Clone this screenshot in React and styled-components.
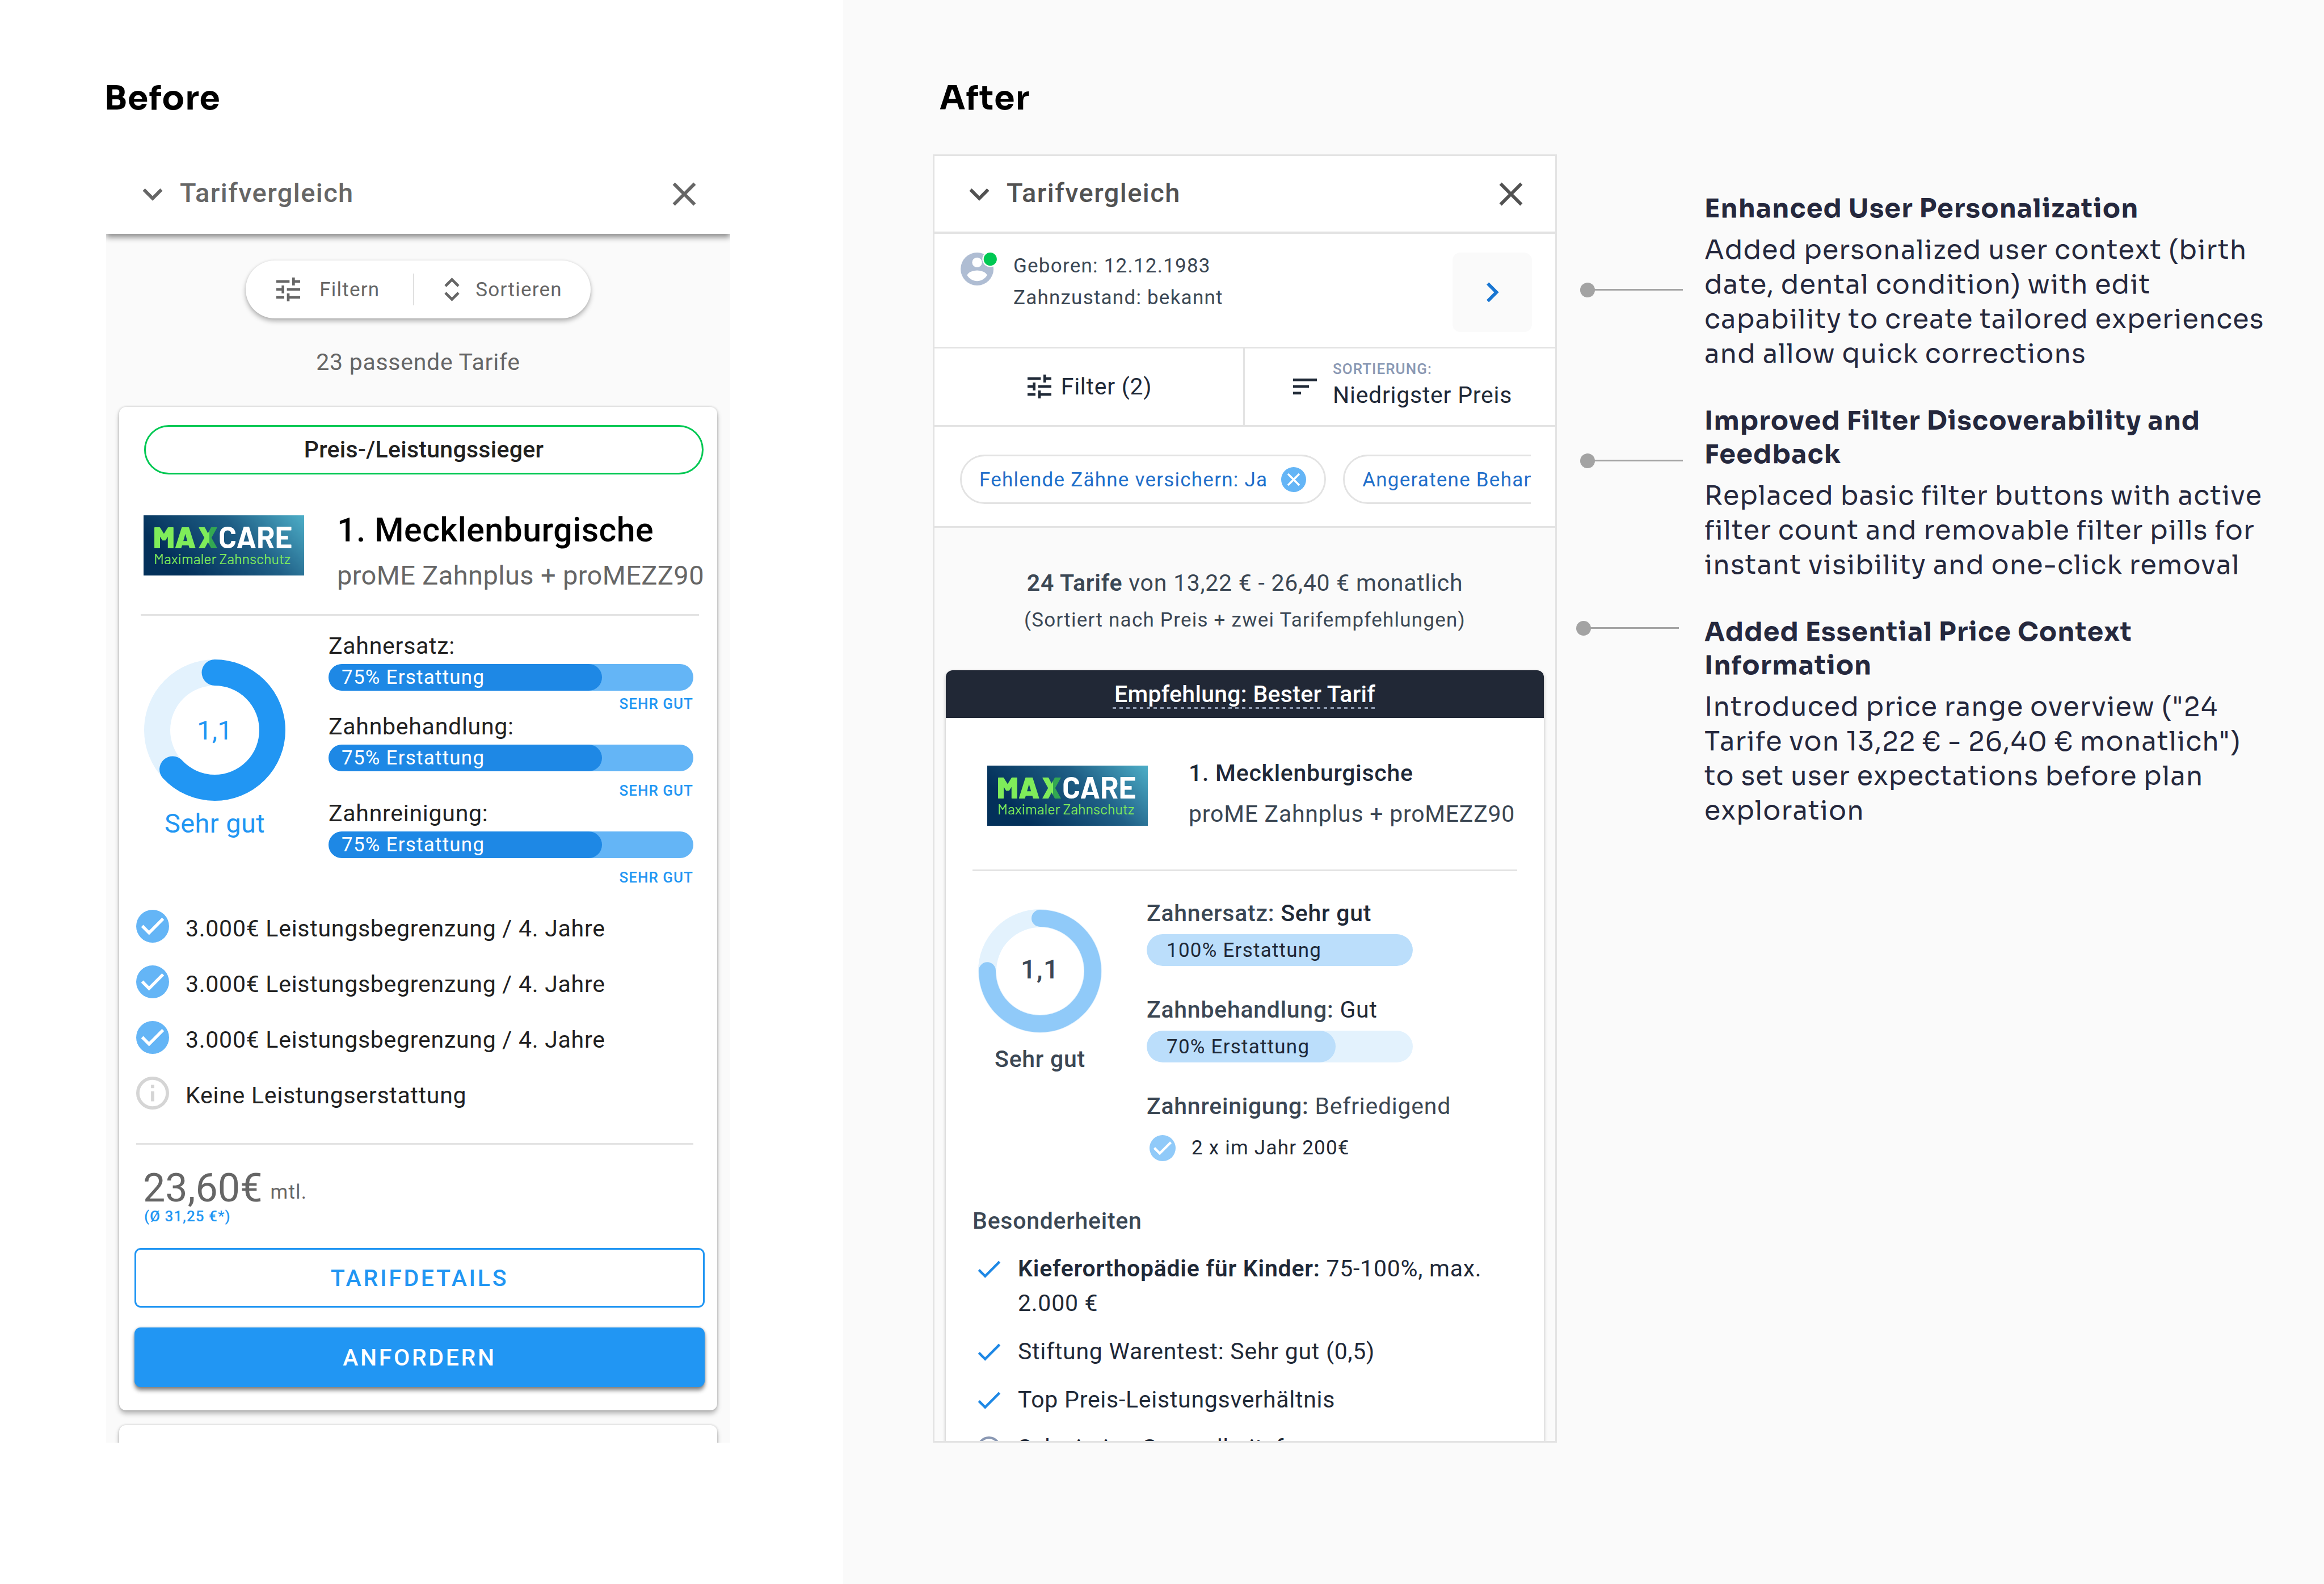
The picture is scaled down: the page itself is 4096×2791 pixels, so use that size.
import React from "react";
import styled, { createGlobalStyle, css } from "styled-components";

const Global = createGlobalStyle`
  *, *::before, *::after { box-sizing: border-box; }
  body { margin: 0; background: #ffffff; font-family: Roboto, "Noto Sans", sans-serif; }
  h1, h2, h3, p, ul { margin: 0; padding: 0; font-weight: 400; }
  ul { list-style: none; }
  button { margin: 0; padding: 0; border: 0; background: none; font: inherit; color: inherit; cursor: pointer; }
  svg { display: block; flex: none; }
`;

/* Type scale shared by both screens */
const caption = css`font-size: 35px; letter-spacing: 0.035em;`;
const body = css`font-size: 41px; letter-spacing: 0.018em;`;
const overline = css`font-size: 26px; letter-spacing: 0.04em; font-weight: 500;`;

const Page = styled.main`
  display: flex;
  min-height: 100vh;
`;
const BeforeSection = styled.section`
  flex: 0 0 36.28%;
  padding: 138px 0 0 184px;
`;
const AfterSection = styled.section`
  flex: 1;
  min-width: 0;
  padding: 138px 105px 0 158px;
  background: #fafafa;
`;
const SectionTitle = styled.h1`
  margin: 0 0 62px ${(p) => p.$indent || 0}px;
  font: 700 58px/72px Sora, Inter, sans-serif;
  letter-spacing: 0.02em;
  color: #000;
`;
const Columns = styled.div`
  display: flex;
  align-items: flex-start;
  gap: 34px;
  padding-left: ${(p) => p.$inset || 0}px;
`;
const Screen = styled.article`
  flex: none;
  width: 1100px;
  height: 2270px;
  overflow: hidden;
  background: #fafafa;
  border: ${(p) => (p.$framed ? "3px solid #e3e3e3" : "0")};
`;

/* Screen header */
const Header = styled.header`
  position: relative;
  display: flex;
  align-items: center;
  gap: 12px;
  background: #fff;
  ${(p) =>
    p.$framed
      ? css`height: 137px; padding: 0 43px 0 44px; border-bottom: 4px solid #e3e3e3; color: #525252;`
      : css`height: 140px; padding: 0 46px 0 47px; box-shadow: 0 6px 10px rgba(0, 0, 0, 0.45); color: #666;`}
`;
const HeaderTitle = styled.h2`
  flex: 1;
  padding: 0 0 4px 1px;
  font-size: 47px;
  line-height: 64px;
  font-weight: 500;
  letter-spacing: 0.03em;
`;

const Icon = ({ d, size = 70, box = "0 0 24 24", height }) => (
  <svg width={size} height={height || size} viewBox={box} fill="currentColor" aria-hidden="true">
    <path d={d} />
  </svg>
);
const EXPAND = "M16.59 8.59 12 13.17 7.41 8.59 6 10l6 6 6-6z";
const CLOSE = "M19 6.41 17.59 5 12 10.59 6.41 5 5 6.41 10.59 12 5 17.59 6.41 19 12 13.41 17.59 19 19 17.59 13.41 12z";
const RIGHT = "M10 6 8.59 7.41 13.17 12l-4.58 4.59L10 18l6-6z";
const TUNE =
  "M3 17v2h6v-2H3zM3 5v2h10V5H3zm10 16v-2h8v-2h-8v-2h-2v6h2zM7 9v2H3v2h4v2h2V9H7zm14 4v-2H11v2h10zm-6-4h2V7h4V5h-4V3h-2v6z";
const SORT = "M3 18h6v-2H3v2zM3 6v2h18V6H3zm0 7h12v-2H3v2z";
const DONE = "M9 16.17 4.83 12l-1.42 1.41L9 19 21 7l-1.41-1.41z";

const ScreenHeader = ({ framed }) => (
  <Header $framed={framed}>
    <button aria-label="Zurück"><Icon d={EXPAND} /></button>
    <HeaderTitle>Tarifvergleich</HeaderTitle>
    <button aria-label="Schließen"><Icon d={CLOSE} /></button>
  </Header>
);

const CheckCircle = ({ size, color }) => (
  <svg width={size} height={size} viewBox="0 0 60 60" aria-hidden="true">
    <circle cx="30" cy="30" r="30" fill={color} />
    <path d="M11 29.5 23.5 42 49 16.5" fill="none" stroke="#fff" strokeWidth="5.6" />
  </svg>
);
const InfoCircle = ({ size, color }) => (
  <svg width={size} height={size} viewBox="0 0 60 60" aria-hidden="true">
    <circle cx="30" cy="30" r="27" fill="none" stroke={color} strokeWidth="6" />
    <path d="M27 15h6v6h-6zM27 27h6v18h-6z" fill={color} />
  </svg>
);

const Logo = styled.svg`
  margin: ${(p) => p.$top}px 0 0 ${(p) => p.$left}px;
  font-family: Barlow, Roboto, sans-serif;
`;
const MaxcareLogo = ({ id, top, left }) => (
  <Logo width="283" height="106" viewBox="0 0 283 106" role="img" aria-label="Maxcare" $top={top} $left={left}>
    <defs>
      <linearGradient id={`${id}-bg`} gradientUnits="userSpaceOnUse" x1="80" y1="110" x2="250" y2="-60">
        <stop offset="0" stopColor="#03305a" />
        <stop offset="0.5" stopColor="#1f5f86" />
        <stop offset="1" stopColor="#56bdd4" />
      </linearGradient>
      <linearGradient id={`${id}-x`}>
        <stop offset="0.56" stopColor="#7fec5a" />
        <stop offset="0.56" stopColor="#33a852" />
      </linearGradient>
    </defs>
    <rect width="283" height="106" fill={`url(#${id}-bg)`} />
    <g fontSize="53" fontWeight="900">
      <text x="17" y="58" fill="#7fec5a">MA</text>
      <text x="96" y="58" fill={`url(#${id}-x)`}>X</text>
      <text x="132" y="58" fill="#fff" fontWeight="700">CARE</text>
    </g>
    <text x="18" y="86" fontSize="25" fill="#7fec5a">Maximaler Zahnschutz</text>
  </Logo>
);

/* Score ring */
const RingBox = styled.div`
  display: grid;
  place-items: center;
  width: max-content;
  & > * { grid-area: 1 / 1; }
`;
const Ring = ({ size, track, stroke, value, color, children }) => {
  const r = (size - track) / 2;
  const len = 2 * Math.PI * r;
  return (
    <RingBox>
      <svg width={size} height={size} viewBox={`0 0 ${size} ${size}`} aria-hidden="true">
        <g fill="none" transform={`rotate(-90 ${size / 2} ${size / 2})`}>
          <circle cx={size / 2} cy={size / 2} r={r} stroke="#e3f2fd" strokeWidth={track} />
          <circle cx={size / 2} cy={size / 2} r={r} stroke={color} strokeWidth={stroke} strokeLinecap="round" strokeDasharray={`${len * value} ${len}`} />
        </g>
      </svg>
      {children}
    </RingBox>
  );
};

const Rule = styled.hr`
  height: 3px;
  border: 0;
  background: #e3e3e3;
  margin: ${(p) => p.$m};
`;

/* ---------- Before ---------- */
const ActionPill = styled.div`
  display: flex;
  align-items: center;
  width: max-content;
  height: 102px;
  margin: 47px auto 0;
  border-radius: 51px;
  background: #fff;
  color: #666;
  box-shadow: 0 5px 8px rgba(0, 0, 0, 0.28), 0 0 4px rgba(0, 0, 0, 0.1);
`;
const PillAction = styled.button`
  ${caption}
  display: flex;
  align-items: center;
  gap: ${(p) => p.$gap}px;
  height: 56px;
  padding: ${(p) => p.$pad};
  & + & { border-left: 2px solid #e0e0e0; }
`;
const ResultCount = styled.p`
  ${body}
  margin: 49px 0 51px;
  line-height: 56px;
  text-align: center;
  color: #666;
`;
const OldCard = styled.section`
  margin: 0 23px 26px;
  padding: 32px 22px 41px 27px;
  min-height: 200px;
  border-radius: 12px;
  background: #fff;
  box-shadow: 0 6px 8px rgba(0, 0, 0, 0.26), 0 0 4px rgba(0, 0, 0, 0.2);
`;
const WinnerBadge = styled.p`
  margin: 0 2px 58px 17px;
  border: 3px solid #00c853;
  border-radius: 44px;
  font-size: 41px;
  font-weight: 500;
  letter-spacing: 0.007em;
  line-height: 81px;
  text-align: center;
  color: #212121;
`;
const Provider = styled.div`
  display: flex;
  align-items: flex-start;
  gap: ${(p) => p.$gap}px;
  white-space: nowrap;
`;
const OldName = styled.h3`
  font-size: 59px;
  line-height: 80px;
  letter-spacing: 0.008em;
  font-weight: 500;
  color: #000;
`;
const OldTariff = styled.p`
  font-size: 47px;
  line-height: 80px;
  letter-spacing: 0.008em;
  color: #666;
`;
const Ratings = styled.div`
  display: flex;
  align-items: flex-start;
`;
const ScoreColumn = styled.div`
  display: flex;
  flex-direction: column;
  align-items: center;
  gap: ${(p) => p.$gap}px;
  margin: ${(p) => p.$m};
`;
const OldScore = styled.p`
  font-size: 47px;
  line-height: 64px;
  letter-spacing: 0.008em;
  color: #2196f3;
`;
const OldBars = styled.ul`
  flex: 1;
  margin: 29px 20px 0 0;
`;
const OldLabel = styled.p`
  ${body}
  line-height: 48px;
  margin-bottom: 8px;
  color: #212121;
`;
const Track = styled.div`
  ${caption}
  border-radius: 28px;
  overflow: hidden;
  ${(p) =>
    p.$light
      ? css`width: 469px; height: 56px; line-height: 58px; background: #e3f2fd; color: #1f2937;`
      : css`height: 47px; line-height: 47px; background: #64b5f6; color: #fff;`}
`;
const Fill = styled.div`
  height: 100%;
  border-radius: 28px;
  padding-left: ${(p) => (p.$light ? 35 : 23)}px;
  background: ${(p) => (p.$light ? "#bbdefb" : "#1e88e5")};
  white-space: nowrap;
`;
const OldRating = styled.p`
  ${overline}
  margin-top: ${(p) => p.$gap}px;
  line-height: 31px;
  text-align: right;
  color: #2196f3;
`;
const FeatureList = styled.ul`
  display: grid;
  gap: 40px;
  margin: 41px 0 0 3px;
`;
const Feature = styled.li`
  ${body}
  display: flex;
  gap: 29px;
  line-height: 58px;
  color: #212121;
`;
const FeatureText = styled.span`
  margin-top: 4px;
  height: 54px;
`;
const PriceRow = styled.div`
  display: flex;
  align-items: flex-end;
  gap: 14px;
  margin: 39px 0 0 15px;
  color: #666;
`;
const Price = styled.strong`
  font-size: 70px;
  line-height: 74px;
  font-weight: 400;
`;
const PerMonth = styled.span`
  ${caption}
  line-height: 58px;
`;
const Average = styled.p`
  ${overline}
  margin: 0 0 43px 17px;
  line-height: 26px;
  color: #2196f3;
`;
const CardButton = styled.button`
  display: block;
  width: 100%;
  height: 105px;
  border-radius: 11px;
  font-size: 41px;
  font-weight: 500;
  letter-spacing: 0.089em;
  ${(p) =>
    p.$filled
      ? css`margin-top: 35px; background: #2196f3; color: #fff; box-shadow: 0 6px 7px rgba(0, 0, 0, 0.45), 0 0 4px rgba(0, 0, 0, 0.2);`
      : css`border: 3px solid #2196f3; color: #2196f3;`}
`;

const OLD_BARS = [
  { label: "Zahnersatz:", gap: 8 },
  { label: "Zahnbehandlung:", gap: 19 },
  { label: "Zahnreinigung:", gap: 19 },
];
const OLD_FEATURES = [
  { ok: true, text: "3.000€ Leistungsbegrenzung / 4. Jahre" },
  { ok: true, text: "3.000€ Leistungsbegrenzung / 4. Jahre" },
  { ok: true, text: "3.000€ Leistungsbegrenzung / 4. Jahre" },
  { ok: false, text: "Keine Leistungserstattung" },
];

const BeforeScreen = () => (
  <Screen>
    <ScreenHeader />
    <ActionPill>
      <PillAction $gap={34} $pad="0 59px 0 54px">
        <Icon d={TUNE} size={42} box="3 3 18 18" />
        Filtern
      </PillAction>
      <PillAction $gap={28} $pad="0 50px 0 53px">
        <svg width="27" height="42" viewBox="0 0 27 42" fill="none" stroke="currentColor" strokeWidth="4.6" aria-hidden="true">
          <path d="M2 15 13.5 3.5 25 15M2 27l11.5 11.5L25 27" />
        </svg>
        Sortieren
      </PillAction>
    </ActionPill>
    <ResultCount>23 passende Tarife</ResultCount>
    <OldCard>
      <WinnerBadge>Preis-/Leistungssieger</WinnerBadge>
      <Provider $gap={58}>
        <MaxcareLogo id="old" top={14} left={16} />
        <div>
          <OldName>1. Mecklenburgische</OldName>
          <OldTariff>proME Zahnplus + proMEZZ90</OldTariff>
        </div>
      </Provider>
      <Rule $m="28px 10px 0 11px" />
      <Ratings>
        <ScoreColumn $gap={8} $m="77px 76px 0 17px">
          <Ring size={249} track={46} stroke={46} value={0.63} color="#2196f3">
            <OldScore>1,1</OldScore>
          </Ring>
          <OldScore>Sehr gut</OldScore>
        </ScoreColumn>
        <OldBars>
          {OLD_BARS.map((b) => (
            <li key={b.label}>
              <OldLabel>{b.label}</OldLabel>
              <Track><Fill style={{ width: "75%" }}>75% Erstattung</Fill></Track>
              <OldRating $gap={b.gap}>SEHR GUT</OldRating>
            </li>
          ))}
        </OldBars>
      </Ratings>
      <FeatureList>
        {OLD_FEATURES.map((f, i) => (
          <Feature key={i}>
            {f.ok ? <CheckCircle size={58} color="#64b5f6" /> : <InfoCircle size={58} color="#d5d5d5" />}
            <FeatureText>{f.text}</FeatureText>
          </Feature>
        ))}
      </FeatureList>
      <Rule $m="59px 20px 0 3px" />
      <PriceRow>
        <Price>23,60€</Price>
        <PerMonth>mtl.</PerMonth>
      </PriceRow>
      <Average>(Ø 31,25 €*)</Average>
      <CardButton>TARIFDETAILS</CardButton>
      <CardButton $filled>ANFORDERN</CardButton>
    </OldCard>
    <OldCard />
  </Screen>
);

/* ---------- After ---------- */
const UserRow = styled.section`
  ${caption}
  display: flex;
  padding: 33px 41px 26px 46px;
  background: #fff;
  border-bottom: 3px solid #e3e3e3;
  color: #3b4754;
`;
const Avatar = styled.svg`margin-right: 29px;`;
const UserFacts = styled.div`
  flex: 1;
  display: flex;
  flex-direction: column;
  gap: 12px;
  padding-top: 2px;
  line-height: 44px;
`;
const EditButton = styled.button`
  display: grid;
  place-items: center;
  width: 140px;
  height: 140px;
  border-radius: 14px;
  background: #fafafa;
  color: #1976d2;
`;
const Toolbar = styled.div`
  display: grid;
  grid-template-columns: 1fr 1fr;
  height: 138px;
  background: #fff;
  border-bottom: 3px solid #e3e3e3;
  color: #1f2937;
`;
const Tool = styled.button`
  ${body}
  display: flex;
  align-items: center;
  justify-content: center;
  gap: ${(p) => p.$gap}px;
  padding-bottom: 2px;
  text-align: left;
  &:first-child { border-right: 3px solid #e3e3e3; padding-left: 3px; }
  & + & { padding-left: 9px; }
`;
const ToolLabel = styled.span`
  ${overline}
  display: block;
  line-height: 30px;
  color: #8a98b3;
`;
const ToolValue = styled.span`
  display: block;
  line-height: 62px;
`;
const ChipRow = styled.div`
  padding: 49px 43px 39px 45px;
  background: #fff;
  border-bottom: 3px solid #e3e3e3;
`;
const Chips = styled.div`
  display: flex;
  gap: 30px;
  overflow: hidden;
`;
const Chip = styled.span`
  ${caption}
  flex: none;
  display: flex;
  align-items: center;
  gap: 24px;
  height: 87px;
  padding: 1px 32px 0 31px;
  border: 3px solid #e3e3e3;
  border-radius: 44px;
  white-space: nowrap;
  color: #1f6fca;
`;
const Summary = styled.div`
  padding: 64px 0 55px;
  text-align: center;
  line-height: 66px;
  color: #3b4754;
`;
const PriceRange = styled.p`
  ${body}
`;
const SortHint = styled.p`
  ${caption}
`;
const Strong = styled.strong`
  font-weight: ${(p) => p.$w || 600};
  color: ${(p) => p.$color || "inherit"};
`;
const NewCard = styled.section`
  margin: 0 20px;
  border-radius: 12px 12px 0 0;
  background: #fff;
  box-shadow: 0 3px 6px rgba(0, 0, 0, 0.25);
`;
const Banner = styled.p`
  display: flex;
  align-items: center;
  justify-content: center;
  height: 84px;
  border-radius: 12px 12px 0 0;
  background: #212836;
  color: #fff;
  font-size: 41px;
  font-weight: 500;
  letter-spacing: 0.007em;
`;
const BannerText = styled.span`
  padding: 0 3px;
  line-height: 52px;
  background: repeating-linear-gradient(90deg, #8f9bb0 0 6px, transparent 6px 12px) left bottom / 100% 3px no-repeat;
`;
const NewBody = styled.div`
  padding: 61px 47px 0;
`;
const NewName = styled.h3`
  ${body}
  line-height: 72px;
  font-weight: 500;
  color: #1f2937;
`;
const NewTariff = styled.p`
  ${body}
  line-height: 72px;
  color: #3b4754;
`;
const NewScore = styled.p`
  font-size: 47px;
  line-height: 64px;
  font-weight: 500;
  letter-spacing: 0.03em;
  padding-bottom: 6px;
  color: #3b4754;
`;
const NewVerdict = styled.p`
  ${body}
  line-height: 56px;
  font-weight: 500;
  color: #3b4754;
`;
const NewBars = styled.ul`
  display: grid;
  gap: 53px;
  margin-top: 50px;
`;
const NewLabel = styled.p`
  ${body}
  line-height: 48px;
  margin-bottom: 13px;
  color: #3b4754;
`;
const Cleaning = styled.p`
  ${caption}
  display: flex;
  align-items: center;
  gap: 28px;
  margin: 27px 0 0 5px;
  line-height: 46px;
  color: #1f2937;
`;
const HighlightsTitle = styled.h3`
  ${body}
  margin: 81px 0 30px;
  line-height: 48px;
  font-weight: 500;
  color: #3b4754;
`;
const Highlights = styled.ul`
  display: grid;
  gap: 24px;
`;
const Highlight = styled.li`
  ${body}
  display: flex;
  gap: 24px;
  padding-left: 2px;
  line-height: 61px;
  color: #1f2937;
`;
const HighlightIcon = styled.span`
  display: grid;
  place-items: center;
  flex: 0 0 54px;
  height: 61px;
  color: #1e88e5;
`;

const AfterScreen = () => (
  <Screen $framed>
    <ScreenHeader framed />
    <UserRow>
      <Avatar width="64" height="58" viewBox="0 0 66 60" aria-hidden="true">
        <circle cx="30" cy="30" r="30" fill="#afbdd3" />
        <circle cx="30" cy="18" r="9" fill="#fff" />
        <path d="M12 42c0-6 12-9.300 18-9.300s18 3.300 18 9.300c-4 6-10.500 10-18 10s-14-4-18-10z" fill="#fff" />
        <circle cx="54" cy="12" r="14.500" fill="#fff" />
        <circle cx="54" cy="12" r="12" fill="#00c853" />
      </Avatar>
      <UserFacts>
        <p>Geboren: 12.12.1983</p>
        <p>Zahnzustand: bekannt</p>
      </UserFacts>
      <EditButton aria-label="Angaben bearbeiten"><Icon d={RIGHT} /></EditButton>
    </UserRow>
    <Toolbar>
      <Tool $gap={17}>
        <Icon d={TUNE} size={42} box="3 3 18 18" />
        Filter (2)
      </Tool>
      <Tool $gap={28}>
        <Icon d={SORT} size={42} height={28} box="3 6 18 12" />
        <span>
          <ToolLabel>SORTIERUNG:</ToolLabel>
          <ToolValue>Niedrigster Preis</ToolValue>
        </span>
      </Tool>
    </Toolbar>
    <ChipRow>
      <Chips>
        <Chip>
          Fehlende Zähne versichern: Ja
          <button aria-label="Filter entfernen">
            <svg width="44" height="44" viewBox="0 0 44 44" aria-hidden="true">
              <circle cx="22" cy="22" r="22" fill="#64b5f6" />
              <path d="M12 12l20 20M32 12 12 32" stroke="#fff" strokeWidth="3.4" />
            </svg>
          </button>
        </Chip>
        <Chip>Angeratene Behandlungen</Chip>
      </Chips>
    </ChipRow>
    <Summary>
      <PriceRange><Strong>24 Tarife</Strong> von 13,22 € - 26,40 € monatlich</PriceRange>
      <SortHint>(Sortiert nach Preis + zwei Tarifempfehlungen)</SortHint>
    </Summary>
    <NewCard>
      <Banner><BannerText>Empfehlung: Bester Tarif</BannerText></Banner>
      <NewBody>
        <Provider $gap={72}>
          <MaxcareLogo id="new" top={23} left={26} />
          <div>
            <NewName>1. Mecklenburgische</NewName>
            <NewTariff>proME Zahnplus + proMEZZ90</NewTariff>
          </div>
        </Provider>
        <Rule $m="62px 0 0" />
        <Ratings>
          <ScoreColumn $gap={18} $m="67px 79px 0 10px">
            <Ring size={218} track={32} stroke={30} value={0.75} color="#90caf9">
              <NewScore>1,1</NewScore>
            </Ring>
            <NewVerdict>Sehr gut</NewVerdict>
          </ScoreColumn>
          <NewBars>
            <li>
              <NewLabel><Strong $w={500}>Zahnersatz:</Strong> <Strong $w={500} $color="#1f2937">Sehr gut</Strong></NewLabel>
              <Track $light><Fill $light style={{ width: "100%" }}>100% Erstattung</Fill></Track>
            </li>
            <li>
              <NewLabel><Strong $w={500}>Zahnbehandlung:</Strong> <Strong $w={400} $color="#1f2937">Gut</Strong></NewLabel>
              <Track $light><Fill $light style={{ width: "71%" }}>70% Erstattung</Fill></Track>
            </li>
            <li>
              <NewLabel><Strong $w={500}>Zahnreinigung:</Strong> Befriedigend</NewLabel>
              <Cleaning><CheckCircle size={46} color="#90caf9" />2 x im Jahr 200€</Cleaning>
            </li>
          </NewBars>
        </Ratings>
        <HighlightsTitle>Besonderheiten</HighlightsTitle>
        <Highlights>
          <Highlight>
            <HighlightIcon><Icon d={DONE} size={54} /></HighlightIcon>
            <p><Strong>Kieferorthopädie für Kinder:</Strong> 75-100%, max. 2.000 €</p>
          </Highlight>
          <Highlight>
            <HighlightIcon><Icon d={DONE} size={54} /></HighlightIcon>
            <p>Stiftung Warentest: Sehr gut (0,5)</p>
          </Highlight>
          <Highlight>
            <HighlightIcon><Icon d={DONE} size={54} /></HighlightIcon>
            <p>Top Preis-Leistungsverhältnis</p>
          </Highlight>
          <Highlight>
            <HighlightIcon><InfoCircle size={42} color="#8a98b3" /></HighlightIcon>
            <p>Schwierige Gesundheitsfragen</p>
          </Highlight>
        </Highlights>
      </NewBody>
    </NewCard>
  </Screen>
);

/* ---------- Callouts ---------- */
const Callouts = styled.aside`
  flex: 1;
  min-width: 0;
  display: grid;
  gap: 58px;
  padding-top: 66px;
  font-family: Sora, "Noto Sans", sans-serif;
  font-size: 46px;
  letter-spacing: 0.025em;
  color: #25283d;
`;
const Callout = styled.section`
  display: flex;
  align-items: flex-start;
  gap: 38px;
`;
const Connector = styled.div`
  flex: 0 0 188px;
  display: flex;
  justify-content: ${(p) => (p.$near ? "flex-start" : "flex-end")};
  margin-top: ${(p) => p.$drop}px;
`;
const CalloutTitle = styled.h2`
  margin-bottom: 13px;
  font-size: 46px;
  line-height: 59px;
  font-weight: 700;
`;
const CalloutText = styled.p`
  line-height: 61px;
`;

const CALLOUTS = [
  {
    drop: 159,
    title: "Enhanced User Personalization",
    text: "Added personalized user context (birth date, dental condition) with edit capability to create tailored experiences and allow quick corrections",
  },
  {
    drop: 86,
    title: "Improved Filter Discoverability and Feedback",
    text: "Replaced basic filter buttons with active filter count and removable filter pills for instant visibility and one-click removal",
  },
  {
    drop: 9,
    near: true,
    title: "Added Essential Price Context Information",
    text: 'Introduced price range overview ("24 Tarife von 13,22 € - 26,40 € monatlich") to set user expectations before plan exploration',
  },
];

export default function App() {
  return (
    <>
      <Global />
      <Page>
        <BeforeSection>
          <SectionTitle>Before</SectionTitle>
          <Columns $inset={3}>
            <BeforeScreen />
          </Columns>
        </BeforeSection>
        <AfterSection>
          <SectionTitle $indent={12}>After</SectionTitle>
          <Columns>
            <AfterScreen />
            <Callouts>
              {CALLOUTS.map((c) => (
                <Callout key={c.title}>
                  <Connector $drop={c.drop} $near={c.near}>
                    <svg width="181" height="28" viewBox="0 0 181 28" fill="#a3a3a3" aria-hidden="true">
                      <circle cx="13" cy="14" r="13" />
                      <rect x="20" y="12" width="161" height="3" />
                    </svg>
                  </Connector>
                  <div>
                    <CalloutTitle>{c.title}</CalloutTitle>
                    <CalloutText>{c.text}</CalloutText>
                  </div>
                </Callout>
              ))}
            </Callouts>
          </Columns>
        </AfterSection>
      </Page>
    </>
  );
}
